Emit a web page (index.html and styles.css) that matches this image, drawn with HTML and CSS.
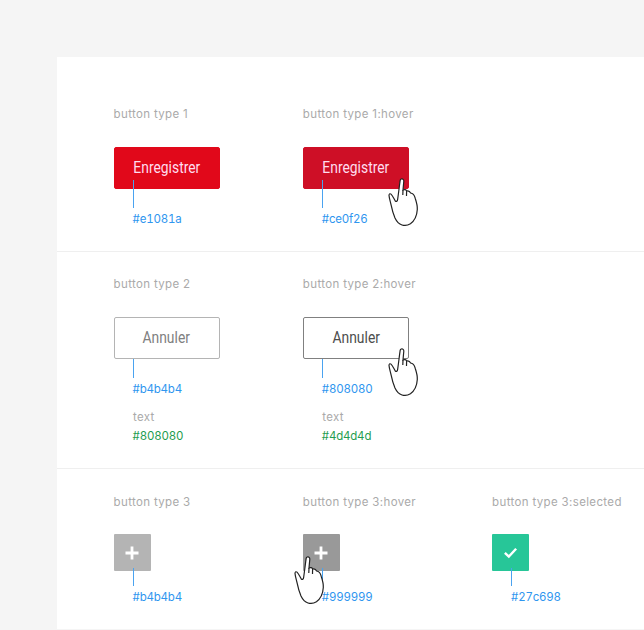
FILE: index.html
```html
<!DOCTYPE html>
<html lang="fr">
<head>
<meta charset="utf-8">
<title>Buttons</title>
<link rel="stylesheet" href="styles.css">
</head>
<body>
<svg class="defs" width="0" height="0" aria-hidden="true">
  <symbol id="hand" viewBox="0 0 32 50">
    <path d="M13.3 1C14.8 .6 15.9 1.6 15.8 3.2L15 12C16.6 11.2 18 11.6 18.6 13C20 12.6 21.8 13.2 22.6 15C24.8 15.2 26.4 17.2 27.2 20.2C28.6 24.4 29.6 27.6 29.3 31.5C29 36.5 26.8 42.6 22.4 45.8C19.6 47.6 16.6 47.8 14 47C10.6 46 8.6 43.4 7 40C5.6 36.6 4.2 32.6 3.4 28.2C2.6 24.4 1.2 20.4 1 17.2C1.2 15.6 2.2 15.4 3 16.2C4.6 17.8 5.6 20.2 7.4 23.2C8.4 23.8 9.4 23.2 9.6 21.6C10.6 15 11.4 7.4 12.2 2.2C12.4 1.6 12.8 1.2 13.3 1Z"/>
    <path d="M15 12L14.8 17M18.6 13L18.5 18"/>
  </symbol>
</svg>
<main class="panel">
  <section class="row row-one">
    <div class="cell">
      <p class="label">button type 1</p>
      <div class="control">
        <button class="btn btn-primary" type="button"><span class="btn-text">Enregistrer</span></button>
      </div>
      <div class="line"></div>
      <p class="hex">#e1081a</p>
    </div>
    <div class="cell">
      <p class="label">button type 1:hover</p>
      <div class="control">
        <button class="btn btn-primary-hover" type="button"><span class="btn-text">Enregistrer</span></button>
        <svg class="hand hand-right"><use href="#hand"/></svg>
      </div>
      <div class="line"></div>
      <p class="hex">#ce0f26</p>
    </div>
  </section>
  <section class="row row-two">
    <div class="cell">
      <p class="label">button type 2</p>
      <div class="control">
        <button class="btn btn-ghost" type="button"><span class="btn-text">Annuler</span></button>
      </div>
      <div class="line line-short"></div>
      <p class="hex">#b4b4b4</p>
      <p class="sub">text</p>
      <p class="green">#808080</p>
    </div>
    <div class="cell">
      <p class="label">button type 2:hover</p>
      <div class="control">
        <button class="btn btn-ghost-hover" type="button"><span class="btn-text">Annuler</span></button>
        <svg class="hand hand-right"><use href="#hand"/></svg>
      </div>
      <div class="line line-short"></div>
      <p class="hex">#808080</p>
      <p class="sub">text</p>
      <p class="green">#4d4d4d</p>
    </div>
  </section>
  <section class="row row-three">
    <div class="cell">
      <p class="label">button type 3</p>
      <div class="control">
        <button class="square square-grey" type="button" aria-label="Ajouter">
          <svg class="glyph" viewBox="0 0 16 16"><path d="M8 1.5V14.5M1.5 8H14.5"/></svg>
        </button>
      </div>
      <div class="line line-square"></div>
      <p class="hex hex-square">#b4b4b4</p>
    </div>
    <div class="cell">
      <p class="label">button type 3:hover</p>
      <div class="control">
        <button class="square square-dark" type="button" aria-label="Ajouter">
          <svg class="glyph" viewBox="0 0 16 16"><path d="M8 1.5V14.5M1.5 8H14.5"/></svg>
        </button>
        <div class="line line-square line-over"></div>
        <svg class="hand hand-left"><use href="#hand"/></svg>
      </div>
      <p class="hex hex-square hex-after">#999999</p>
    </div>
    <div class="cell">
      <p class="label">button type 3:selected</p>
      <div class="control">
        <button class="square square-green" type="button" aria-label="Sélectionné">
          <svg class="glyph glyph-check" viewBox="0 0 16 16"><path d="M2 8.5L6.2 12.4L14 4"/></svg>
        </button>
      </div>
      <div class="line line-square"></div>
      <p class="hex hex-square">#27c698</p>
    </div>
  </section>
</main>
</body>
</html>
```
FILE: styles.css
```css
* { box-sizing: border-box; }
html, body { margin: 0; height: 630px; overflow: hidden; }
body {
  background: #f5f5f5;
  font-family: Inter, "Liberation Sans", sans-serif;
  font-size: 12px;
}
p { margin: 0; }
.defs { position: absolute; }
.panel {
  margin: 57px 0 0 57px;
  background: #fff;
  height: 572px;
}
.row {
  display: grid;
  grid-template-columns: 189.25px 189.25px 152px;
  padding-left: 56.6px;
  border-bottom: 1px solid #efefef;
}
.row-one { height: 195px; padding-top: 49px; }
.row-two { height: 217px; padding-top: 24px; }
.row-three { height: 160px; padding-top: 25px; border-bottom: 0; }
.label {
  color: #aaa;
  font-size: 11.5px;
  line-height: 16px;
  height: 16px;
  letter-spacing: .35px;
}
.control {
  position: relative;
  margin-top: 25px;
  height: 42px;
}
.row-three .control { margin-top: 24px; height: 37px; }
.btn {
  display: block;
  width: 106px;
  height: 42px;
  padding: 0 0 2px;
  border: 1px solid;
  border-radius: 2px;
  font-family: Roboto, sans-serif;
  font-size: 16.5px;
  cursor: pointer;
}
.btn-text { display: inline-block; transform: scaleX(.84); }
.btn-primary { background: #e1081a; border-color: #e1081a; color: #fde; }
.btn-primary-hover { background: #ce0f26; border-color: #ce0f26; color: #fde; }
.btn-ghost { background: #fff; border-color: #b4b4b4; color: #808080; }
.btn-ghost-hover { background: #fff; border-color: #808080; color: #4d4d4d; }
.square {
  display: flex;
  align-items: center;
  justify-content: center;
  width: 37px;
  height: 37px;
  padding: 0;
  border: 0;
  border-radius: 1px;
}
.square-grey { background: #b4b4b4; }
.square-dark { background: #999; }
.square-green { background: #27c698; }
.glyph {
  width: 16px;
  height: 16px;
  fill: none;
  stroke: #fff;
  stroke-width: 2.8;
}
.glyph-check { width: 15px; height: 15px; stroke-width: 2.6; }
.line {
  position: relative;
  width: 1px;
  height: 28px;
  margin: -9px 0 0 19.4px;
  background: #4aa3f0;
}
.line-short { height: 19px; margin-top: 0; }
.line-square { height: 18px; margin-top: -3px; }
.line-over { position: absolute; top: 34px; left: 0; margin: 0 0 0 19.4px; }
.hex {
  margin: 3px 0 0 19px;
  color: #2f96ef;
  font-size: 11.5px;
  font-feature-settings: "tnum";
  line-height: 16px;
  letter-spacing: -.2px;
}
.hex-after { margin-top: 18px; }
.sub {
  margin: 12px 0 0 19.5px;
  color: #aaa;
  font-size: 11.5px;
  line-height: 16px;
  letter-spacing: .3px;
}
.green {
  margin: 3px 0 0 19px;
  color: #1f9d50;
  font-size: 11.5px;
  font-feature-settings: "tnum";
  line-height: 16px;
  letter-spacing: -.2px;
}
.hand {
  position: absolute;
  width: 32px;
  height: 50px;
  fill: #fff;
  stroke: #222;
  stroke-width: 1.2;
}
.hand-right { left: 85px; top: 31px; }
.hand-left { left: -9px; top: 22px; }
```
